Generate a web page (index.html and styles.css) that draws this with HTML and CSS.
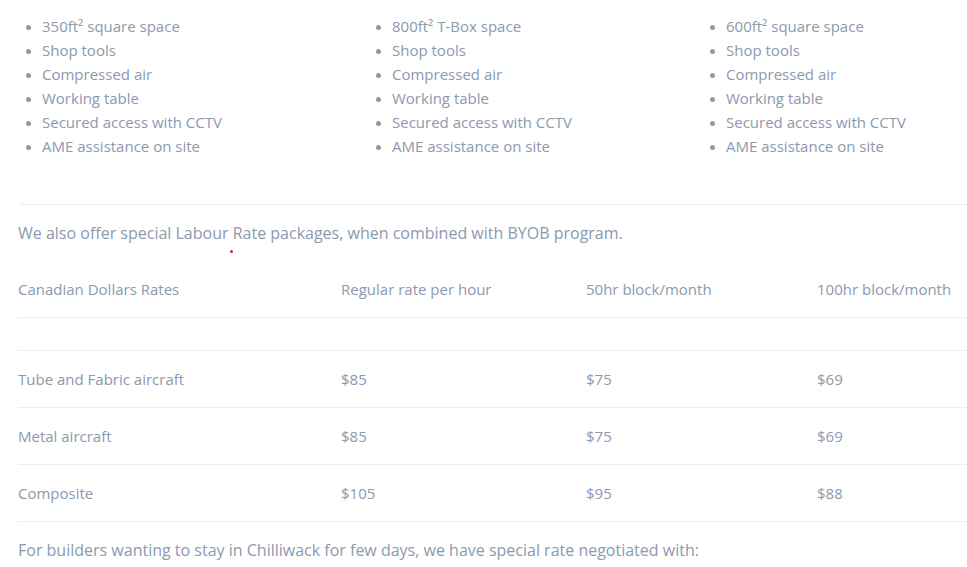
FILE: index.html
```html
<!DOCTYPE html>
<html>
<head>
<meta charset="utf-8">
<link rel="stylesheet" href="styles.css">
</head>
<body>
<div class="page">
  <div class="features">
    <ul class="list">
      <li>350ft² square space</li>
      <li>Shop tools</li>
      <li>Compressed air</li>
      <li>Working table</li>
      <li>Secured access with CCTV</li>
      <li>AME assistance on site</li>
    </ul>
    <ul class="list">
      <li>800ft² T-Box space</li>
      <li>Shop tools</li>
      <li>Compressed air</li>
      <li>Working table</li>
      <li>Secured access with CCTV</li>
      <li>AME assistance on site</li>
    </ul>
    <ul class="list">
      <li>600ft² square space</li>
      <li>Shop tools</li>
      <li>Compressed air</li>
      <li>Working table</li>
      <li>Secured access with CCTV</li>
      <li>AME assistance on site</li>
    </ul>
  </div>
  <hr class="rule">
  <p class="lead">We also offer special Labour Rate packages, when combined with BYOB program.<span class="dot"></span></p>
  <table class="rates">
    <colgroup>
      <col class="c1"><col class="c2"><col class="c3"><col class="c4">
    </colgroup>
    <thead>
      <tr><th>Canadian Dollars Rates</th><th>Regular rate per hour</th><th>50hr block/month</th><th>100hr block/month</th></tr>
    </thead>
    <tbody>
      <tr class="spacer"><td colspan="4"></td></tr>
      <tr><td>Tube and Fabric aircraft</td><td>$85</td><td>$75</td><td>$69</td></tr>
      <tr><td>Metal aircraft</td><td>$85</td><td>$75</td><td>$69</td></tr>
      <tr><td>Composite</td><td>$105</td><td>$95</td><td>$88</td></tr>
    </tbody>
  </table>
  <p class="note">For builders wanting to stay in Chilliwack for few days, we have special rate negotiated with:</p>
</div>
</body>
</html>
```
FILE: styles.css
```css
html, body {
  margin: 0;
  padding: 0;
  background: #ffffff;
}
body {
  font-family: "Open Sans", "Noto Sans", sans-serif;
  color: #8c99ae;
  overflow: hidden;
}
.page {
  padding: 14px 0 0 18px;
}
.features {
  display: grid;
  grid-template-columns: 350px 334px 1fr;
}
.list {
  margin: 0;
  padding: 0 0 0 24px;
  font-size: 15px;
  line-height: 24px;
}
.list li::marker {
  color: #8c99ae;
  font-size: 13px;
}
.rule {
  border: 0;
  border-top: 1px solid #eeeeee;
  margin: 46px 0 0 1px;
  height: 0;
}
.lead {
  position: relative;
  margin: 15px 0 0 0;
  font-size: 16px;
  line-height: 26px;
}
.dot {
  position: absolute;
  left: 212px;
  top: 30px;
  width: 3px;
  height: 3px;
  border-radius: 50%;
  background: #f01818;
}
.rates {
  border-collapse: collapse;
  width: 949px;
  margin-top: 15px;
  font-size: 15px;
}
.c1 { width: 323px; }
.c2 { width: 245px; }
.c3 { width: 231px; }
.rates th, .rates td {
  text-align: left;
  font-weight: 400;
  padding: 16px 0;
  line-height: 24px;
  vertical-align: middle;
}
.rates tr {
  border-bottom: 1px solid #eeeeee;
}
.rates tr.spacer td {
  padding: 0;
  height: 32px;
}
.note {
  margin: 16px 0 0 0;
  font-size: 16px;
  line-height: 24px;
}
```
